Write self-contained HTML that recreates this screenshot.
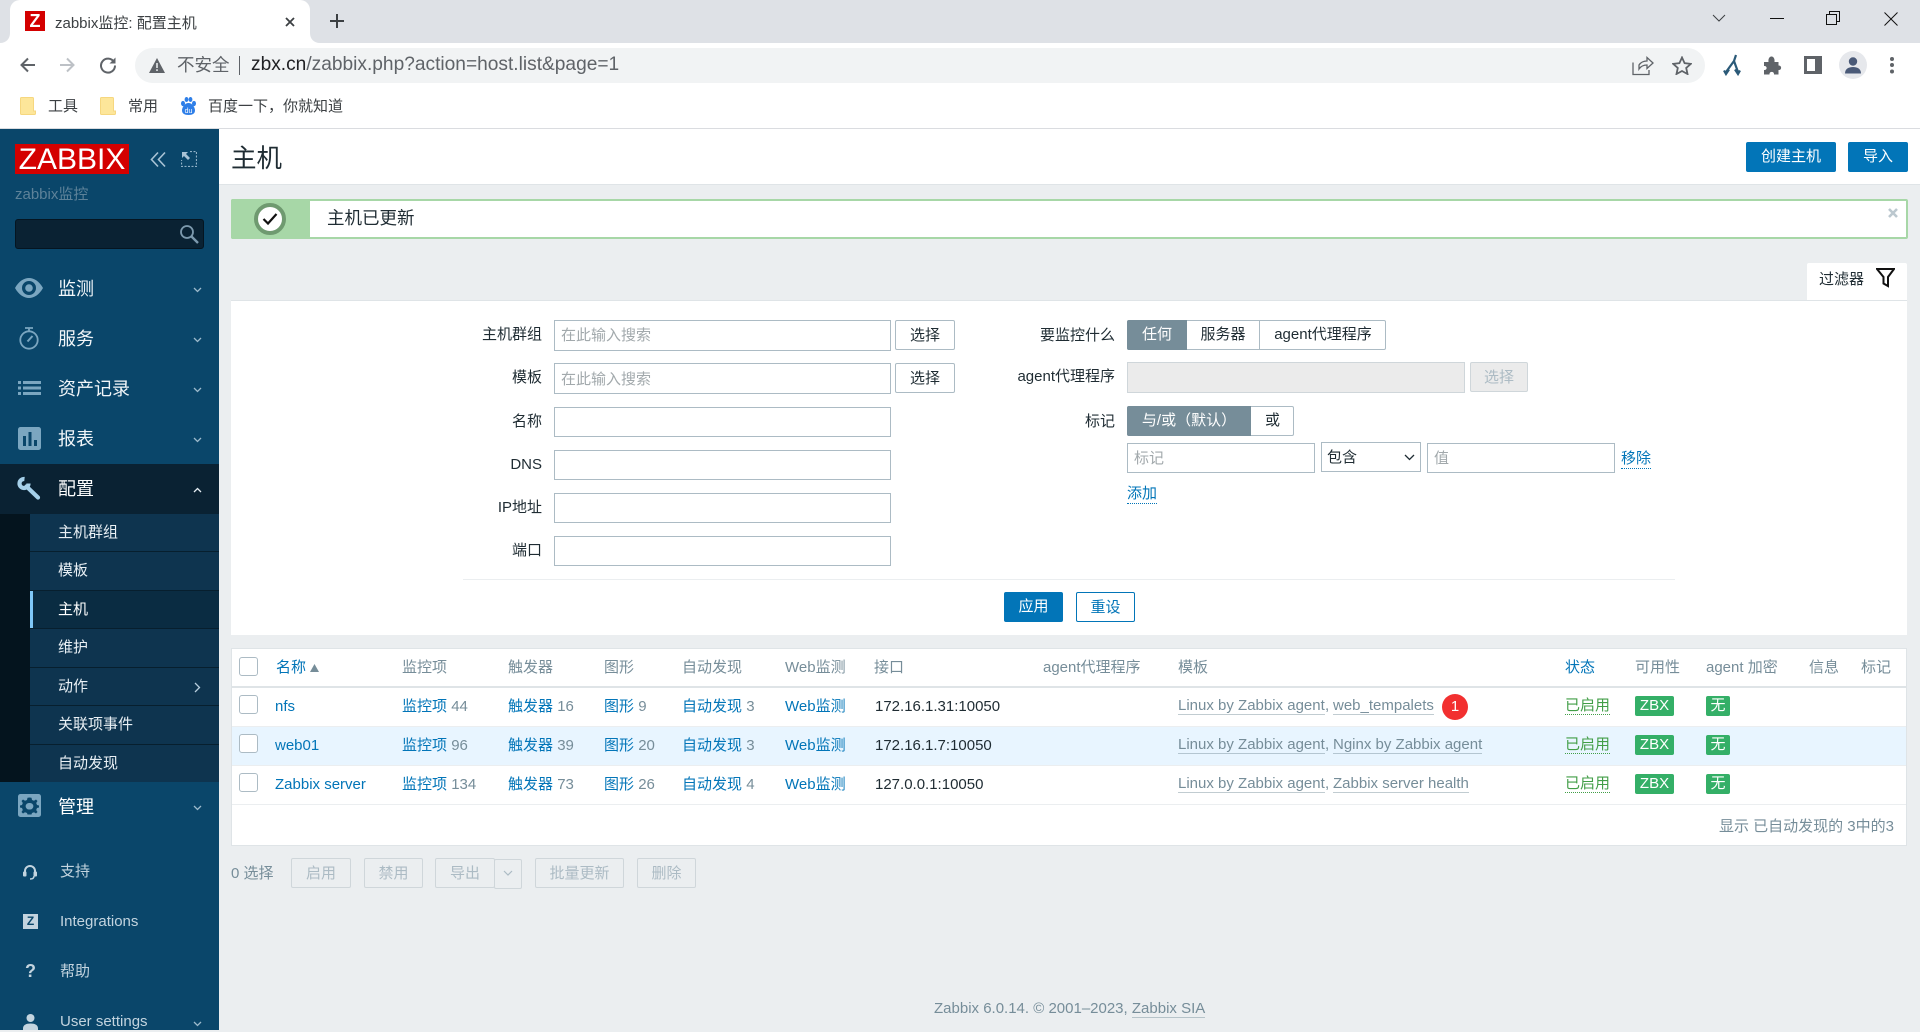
<!DOCTYPE html>
<html lang="zh">
<head>
<meta charset="utf-8">
<title>zabbix监控: 配置主机</title>
<style>
html,body{margin:0;padding:0}
body{position:relative;width:1920px;height:1030px;overflow:hidden;background:#ebeef0;font-family:"Liberation Sans","Noto Sans CJK SC",sans-serif;font-size:15px;color:#1f2c33}
div,span,svg{box-sizing:border-box}
.a{position:absolute}
.t{position:absolute;white-space:nowrap;line-height:20px;height:20px}
.r{text-align:right}
.c{text-align:center}
svg{position:absolute;display:block}
.in{position:absolute;background:#fff;border:1px solid #acbbc4;height:30px}
.ph{position:absolute;color:#a2a9ac;white-space:nowrap;line-height:20px;left:6px;top:5px}
.btn{position:absolute;background:#fff;border:1px solid #acbbc4;border-radius:2px;height:30px;line-height:29px;text-align:center;color:#1f2c33}
.dis{position:absolute;background:#ebeef0;border:1px solid #cfd6da;border-radius:2px;height:30px;line-height:29px;text-align:center;color:#acbbc4}
.blue{position:absolute;background:#0275b8;color:#fff;border-radius:2px;text-align:center;height:30px;line-height:29px}
.side{color:#f2f6f9;font-size:18px}
.sub{color:#e9f0f5;font-size:15px;left:58px}
.low{color:#c3d4df;font-size:15px;left:60px}
.lnk{color:#0275b8}
.gr{color:#768d99}
.cb{position:absolute;left:239px;width:19px;height:19px;background:#fff;border:1px solid #acbbc4;border-radius:3px}
.tp{position:absolute;white-space:nowrap;line-height:17px;height:18px;color:#768d99;border-bottom:1px solid rgba(118,141,153,.45)}
.en{position:absolute;white-space:nowrap;left:1565px;width:45px;line-height:17px;height:18px;color:#429e47;border-bottom:1px dotted #429e47}
.tag{position:absolute;background:#34af67;color:#fff;height:20px;line-height:19px;text-align:center;border-radius:2px}
.th{color:#768d99}
.sep{position:absolute;left:30px;width:189px;height:1px;background:#071f2e}
</style>
</head>
<body>

<!-- browser chrome -->
<div class="a" style="left:0;top:0;width:1920px;height:43px;background:#dee1e6"></div>
<div class="a" style="left:0;top:43px;width:1920px;height:85px;background:#fff"></div>
<div class="a" style="left:0;top:128px;width:1920px;height:1px;background:#dadce0"></div>
<div class="a" style="left:10px;top:0;width:300px;height:44px;background:#fff;border-radius:10px 10px 0 0"></div>
<svg style="left:0;top:33px" width="10" height="10"><path d="M0 10C6 10 10 6 10 0V10Z" fill="#fff"/></svg>
<svg style="left:310px;top:33px" width="10" height="10"><path d="M0 0C0 6 4 10 10 10H0Z" fill="#fff"/></svg>
<div class="a" style="left:25px;top:11px;width:20px;height:20px;background:#d40000;color:#fff;font:bold 18px/20px 'Liberation Sans',sans-serif;text-align:center">Z</div>
<div class="t" style="left:55px;top:14px;color:#3c4043">zabbix监控: 配置主机</div>
<svg style="left:284px;top:16px" width="12" height="12"><path d="M2 2L10 10M10 2L2 10" stroke="#3c4043" stroke-width="1.8"/></svg>
<svg style="left:329px;top:13px" width="16" height="16"><path d="M8 1V15M1 8H15" stroke="#3c4043" stroke-width="2"/></svg>
<svg style="left:1712px;top:13px" width="14" height="10"><path d="M1 2L7 8L13 2" fill="none" stroke="#3c4043" stroke-width="1"/></svg>
<svg style="left:1770px;top:17px" width="14" height="3"><path d="M0 1.5H14" stroke="#111" stroke-width="1"/></svg>
<svg style="left:1826px;top:11px" width="14" height="14"><path d="M.5 3.5H10.5V13.5H.5ZM3.5 3.5V.5H13.5V10.5H10.5" fill="none" stroke="#111" stroke-width="1"/></svg>
<svg style="left:1884px;top:12px" width="14" height="14"><path d="M.5.5L13.5 13.5M13.5.5L.5 13.5" stroke="#111" stroke-width="1"/></svg>

<svg style="left:19px;top:56px" width="18" height="18"><path d="M16 9H3M9 2.5L2.5 9L9 15.5" fill="none" stroke="#5f6368" stroke-width="2"/></svg>
<svg style="left:58px;top:56px" width="18" height="18"><path d="M2 9H15M9 2.5L15.5 9L9 15.5" fill="none" stroke="#bdc1c6" stroke-width="2"/></svg>
<svg style="left:99px;top:56px" width="18" height="18"><path d="M15 6A7 7 0 1 0 16 9.500" fill="none" stroke="#5f6368" stroke-width="2"/><path d="M16.500 1.500V7.500H10.500Z" fill="#5f6368"/></svg>
<div class="a" style="left:135px;top:48px;width:1570px;height:35px;background:#f1f3f4;border-radius:18px"></div>
<svg style="left:149px;top:58px" width="16" height="15"><path d="M8 0L16 15H0Z" fill="#5f6368"/><path d="M8 5V10M8 11.200V13" stroke="#f1f3f4" stroke-width="1.500"/></svg>
<div class="t" style="left:177px;top:55px;font-size:17.500px;color:#5f6368">不安全</div>
<div class="a" style="left:239px;top:56px;width:1px;height:19px;background:#5f6368"></div>
<div class="t" style="left:251px;top:55px;font-size:19.150px;color:#5f6368"><span style="color:#202124">zbx.cn</span>/zabbix.php?action=host.list&amp;page=1</div>
<svg style="left:1632px;top:56px" width="22" height="20"><path d="M7 9C9 6 12 5 15 5V1.500L21 7L15 12.500V9C12 9 9 10 7 13ZM1 6.500V18.500H17V14" fill="none" stroke="#5f6368" stroke-width="1.300"/></svg>
<svg style="left:1672px;top:56px" width="20" height="19"><path d="M10 1.500L12.600 7.200L18.800 7.900L14.200 12L15.500 18L10 15L4.500 18L5.800 12L1.200 7.900L7.400 7.200Z" fill="none" stroke="#5f6368" stroke-width="1.800"/></svg>
<svg style="left:1723px;top:54px" width="18" height="22"><path d="M13 1L11 7L3 18M11 7L15 18M6 15.500L3 20L1 16.500M12 15.500L15 20L17 16.500" fill="none" stroke="#2b5a78" stroke-width="2.200"/></svg>
<svg style="left:1764px;top:56px" width="18" height="19"><path d="M0 6H4.500C4 2 6 .5 7.500.5S11 2 10.500 6H14.500V9.500C18 9 18 14.500 14.500 14V18.500H10C10.500 15 5 15 5.500 18.500H0V14C3.500 14.500 3.500 9.500 0 10Z" fill="#5f6368"/></svg>
<svg style="left:1804px;top:56px" width="18" height="18"><path d="M0 0H18V18H0ZM3 3V15H11V3Z" fill="#5f6368" fill-rule="evenodd"/></svg>
<div class="a" style="left:1839px;top:51px;width:28px;height:28px;border-radius:50%;background:#e6e8ec"></div>
<svg style="left:1844px;top:57px" width="18" height="17"><circle cx="9" cy="4.500" r="4.200" fill="#4a5a78"/><path d="M1 16.500C1 11.500 5 10 9 10S17 11.500 17 16.500Z" fill="#4a5a78"/></svg>
<svg style="left:1889px;top:56px" width="6" height="18"><circle cx="3" cy="3" r="2" fill="#5f6368"/><circle cx="3" cy="9" r="2" fill="#5f6368"/><circle cx="3" cy="15.500" r="2" fill="#5f6368"/></svg>

<!-- bookmarks -->
<svg style="left:20px;top:97px" width="16" height="19"><path d="M1.500.5H12.500Q13.500.5 13.500 1.500V14H15.500V16.500Q15.500 17.500 14.500 17.500H1.500Q.5 17.500 .5 16.500V1.500Q.5.5 1.500.5Z" fill="#fde69a" stroke="#f6d77f"/></svg>
<div class="t" style="left:48px;top:97px;color:#3c4043">工具</div>
<svg style="left:100px;top:97px" width="16" height="19"><path d="M1.500.5H12.500Q13.500.5 13.500 1.500V14H15.500V16.500Q15.500 17.500 14.500 17.500H1.500Q.5 17.500 .5 16.500V1.500Q.5.5 1.500.5Z" fill="#fde69a" stroke="#f6d77f"/></svg>
<div class="t" style="left:128px;top:97px;color:#3c4043">常用</div>
<svg style="left:180px;top:97px" width="17" height="18" fill="#2f7fe8"><ellipse cx="3" cy="6.500" rx="2" ry="2.600"/><ellipse cx="6.500" cy="2.500" rx="1.900" ry="2.500"/><ellipse cx="10.500" cy="2.500" rx="1.900" ry="2.500"/><ellipse cx="14" cy="6.500" rx="2" ry="2.600"/><path d="M8.500 6C5 6 2 10 2 13.500C2 16.500 4.500 18 8.500 18S15 16.500 15 13.500C15 10 12 6 8.500 6Z"/><text x="8.500" y="16" text-anchor="middle" font-size="7" fill="#fff" font-family="Liberation Sans">du</text></svg>
<div class="t" style="left:208px;top:97px;color:#3c4043">百度一下，你就知道</div>

<!-- sidebar -->
<div class="a" style="left:0;top:129px;width:219px;height:901px;background:#0a466a"></div>
<div class="a" style="left:15px;top:144px;width:114px;height:30px;background:#d40000;color:#fff;font-size:30px;line-height:31px;text-align:center">ZABBIX</div>
<svg style="left:150px;top:151px" width="17" height="17"><path d="M8 1.500L1.500 8.500L8 15.500M15 1.500L8.500 8.500L15 15.500" fill="none" stroke="#a9c3d5" stroke-width="1.600"/></svg>
<svg style="left:181px;top:151px" width="16" height="16"><path d="M9 .5H15.500V15.500H.5V9" fill="none" stroke="#8fb0c6" stroke-width="1.200" stroke-dasharray="2 1.500"/><path d="M1 1H7L5 3L9 7L7 9L3 5L1 7Z" fill="#a9c3d5"/></svg>
<div class="t" style="left:15px;top:185px;color:#5d8299">zabbix监控</div>
<div class="a" style="left:15px;top:219px;width:189px;height:30px;background:#0a2233;border:1px solid #051521;border-radius:3px"></div>
<svg style="left:179px;top:224px" width="20" height="20"><circle cx="8" cy="8" r="6" fill="none" stroke="#7d9aae" stroke-width="1.800"/><path d="M12.500 12.500L19 19" stroke="#7d9aae" stroke-width="2.400"/></svg>

<svg style="left:15px;top:278px" width="28" height="20"><path d="M0 10C4 3 9 0 14 0S24 3 28 10C24 17 19 20 14 20S4 17 0 10ZM14 3A7 7 0 1 0 14 17A7 7 0 1 0 14 3Z" fill="#7ba6c0" fill-rule="evenodd"/><circle cx="14" cy="10" r="3.800" fill="#7ba6c0"/></svg>
<div class="t side" style="left:58px;top:279px">监测</div>
<svg style="left:19px;top:327px" width="20" height="23"><circle cx="10" cy="13" r="8.700" fill="none" stroke="#7ba6c0" stroke-width="1.800"/><path d="M6 1H14M10 1V4" stroke="#7ba6c0" stroke-width="1.800"/><path d="M8.500 14.500L13.500 9" stroke="#7ba6c0" stroke-width="2"/></svg>
<div class="t side" style="left:58px;top:329px">服务</div>
<svg style="left:18px;top:381px" width="23" height="14" fill="#7ba6c0"><rect x="0" y="0" width="3" height="3"/><rect x="5" y="0" width="18" height="3"/><rect x="0" y="5.500" width="3" height="3"/><rect x="5" y="5.500" width="18" height="3"/><rect x="0" y="11" width="3" height="3"/><rect x="5" y="11" width="18" height="3"/></svg>
<div class="t side" style="left:58px;top:379px">资产记录</div>
<svg style="left:18px;top:427px" width="23" height="23"><rect width="23" height="23" rx="2.500" fill="#7ba6c0"/><path d="M5 9H8V19H5ZM10.500 5H13.500V19H10.500ZM16 13H19V19H16Z" fill="#0a466a"/></svg>
<div class="t side" style="left:58px;top:429px">报表</div>

<div class="a" style="left:0;top:464px;width:219px;height:50px;background:#0a2233"></div>
<svg style="left:17px;top:476px" width="24" height="24"><path d="M7.500 3A4.500 4.500 0 1 0 11.500 7.500" fill="none" stroke="#a5d0ea" stroke-width="4.200"/><path d="M9.500 10.500L21 21.500" stroke="#a5d0ea" stroke-width="4.200" stroke-linecap="round"/></svg>
<div class="t side" style="left:58px;top:479px;color:#fff">配置</div>
<div class="a" style="left:0;top:514px;width:30px;height:268px;background:#04141e"></div>
<div class="a" style="left:30px;top:514px;width:189px;height:268px;background:#0e344f"></div>
<div class="a" style="left:30px;top:591px;width:189px;height:37px;background:#0a2c42"></div>
<div class="a" style="left:30px;top:591px;width:3px;height:37px;background:#7fc8f8"></div>
<div class="sep" style="top:551px"></div><div class="sep" style="top:590px"></div><div class="sep" style="top:628px"></div><div class="sep" style="top:667px"></div><div class="sep" style="top:705px"></div><div class="sep" style="top:744px"></div>
<div class="t sub" style="top:523px">主机群组</div>
<div class="t sub" style="top:561px">模板</div>
<div class="t sub" style="top:600px;color:#fff">主机</div>
<div class="t sub" style="top:638px">维护</div>
<div class="t sub" style="top:677px">动作</div>
<div class="t sub" style="top:715px">关联项事件</div>
<div class="t sub" style="top:754px">自动发现</div>
<svg style="left:194px;top:682px" width="7" height="11"><path d="M1 1L5.500 5.500L1 10" fill="none" stroke="#b7cddd" stroke-width="1.300"/></svg>

<svg style="left:18px;top:794px" width="23" height="23"><rect width="23" height="23" rx="2.500" fill="#7ba6c0"/><path d="M11.500 3.500L13.500 3.800L14 6L16 6.800L18 5.500L19.500 7L18.200 9L19 11L21 11.500V13.500L19 14L18.200 16L19.500 18L18 19.500L16 18.200L14 19L13.500 20.500H9.500L9 19L7 18.200L5 19.500L3.500 18L4.800 16L4 14L2 13.500V11.500L4 11L4.800 9L3.500 7L5 5.500L7 6.800L9 6L9.500 3.800ZM11.500 9A3.300 3.300 0 1 0 11.500 15.500A3.300 3.300 0 1 0 11.500 9Z" fill="#0a466a" fill-rule="evenodd"/></svg>
<div class="t side" style="left:58px;top:797px;color:#fff">管理</div>

<svg style="left:23px;top:864px" width="14" height="17"><path d="M2 10V7A5 5 0 0 1 12 7V10" fill="none" stroke="#c3d4df" stroke-width="2"/><rect x="0" y="7.500" width="3.500" height="5" rx="1" fill="#c3d4df"/><rect x="10.500" y="7.500" width="3.500" height="5" rx="1" fill="#c3d4df"/><path d="M11 12C11 14.500 9.500 15 7 15" fill="none" stroke="#c3d4df" stroke-width="1.500"/></svg>
<div class="t low" style="top:862px">支持</div>
<div class="a" style="left:23px;top:914px;width:15px;height:15px;background:#c3d4df;color:#0a466a;font:bold 12px/15px 'Liberation Sans',sans-serif;text-align:center">Z</div>
<div class="t low" style="top:912px">Integrations</div>
<div class="t" style="left:25px;top:961px;color:#c3d4df;font-size:18px;font-weight:bold">?</div>
<div class="t low" style="top:962px">帮助</div>
<svg style="left:23px;top:1014px" width="15" height="16"><circle cx="7.500" cy="4" r="4" fill="#c3d4df"/><path d="M0 14.500C0 11 3 9.500 7.500 9.500S15 11 15 14.500V16H0Z" fill="#c3d4df"/></svg>
<div class="t low" style="top:1012px">User settings</div>
<svg style="left:193px;top:287px" width="9" height="6"><path d="M1 1L4.500 4.500L8 1" fill="none" stroke="#9dbacc" stroke-width="1.300"/></svg>
<svg style="left:193px;top:337px" width="9" height="6"><path d="M1 1L4.500 4.500L8 1" fill="none" stroke="#9dbacc" stroke-width="1.300"/></svg>
<svg style="left:193px;top:387px" width="9" height="6"><path d="M1 1L4.500 4.500L8 1" fill="none" stroke="#9dbacc" stroke-width="1.300"/></svg>
<svg style="left:193px;top:437px" width="9" height="6"><path d="M1 1L4.500 4.500L8 1" fill="none" stroke="#9dbacc" stroke-width="1.300"/></svg>
<svg style="left:193px;top:487px" width="9" height="6"><path d="M1 5L4.500 1.500L8 5" fill="none" stroke="#e6eef4" stroke-width="1.300"/></svg>
<svg style="left:193px;top:805px" width="9" height="6"><path d="M1 1L4.500 4.500L8 1" fill="none" stroke="#9dbacc" stroke-width="1.300"/></svg>
<svg style="left:193px;top:1021px" width="9" height="6"><path d="M1 1L4.500 4.500L8 1" fill="none" stroke="#9dbacc" stroke-width="1.300"/></svg>

<!-- page header -->
<div class="a" style="left:219px;top:129px;width:1701px;height:56px;background:#fff;border-bottom:1px solid #dfe4e7"></div>
<div class="t" style="left:231px;top:149px;font-size:25.500px;color:#1f2c33">主机</div>
<div class="blue" style="left:1746px;top:142px;width:90px">创建主机</div>
<div class="blue" style="left:1848px;top:142px;width:60px">导入</div>

<!-- message -->
<div class="a" style="left:231px;top:199px;width:1677px;height:40px;background:#fff;border:2px solid #a7d7a7;border-radius:2px"></div>
<div class="a" style="left:231px;top:199px;width:79px;height:40px;background:#a7d7a7;border-radius:2px 0 0 2px"></div>
<div class="a" style="left:254px;top:203px;width:32px;height:32px;border-radius:50%;background:#fff;border:4px solid #6f9a70"></div>
<svg style="left:262px;top:212px" width="16" height="14"><path d="M1.500 7L6 11.500L14.500 2" fill="none" stroke="#111" stroke-width="2.200"/></svg>
<div class="t" style="left:327px;top:208px;font-size:17.500px">主机已更新</div>
<svg style="left:1888px;top:208px" width="10" height="10"><path d="M1 1L9 9M9 1L1 9" stroke="#bcc8cf" stroke-width="2.600"/></svg>

<!-- filter tab -->
<div class="a" style="left:1807px;top:263px;width:100px;height:38px;background:#fff;border-radius:2px 2px 0 0"></div>
<div class="t" style="left:1819px;top:270px">过滤器</div>
<svg style="left:1876px;top:268px" width="19" height="20"><path d="M1 1H18L12 9V18L7.500 15.500V9Z" fill="none" stroke="#111" stroke-width="2"/></svg>

<!-- filter panel -->
<div class="a" style="left:231px;top:300px;width:1676px;height:335px;background:#fff;border-top:1px solid #dfe4e7"></div>
<div class="t r" style="right:1378px;top:325px">主机群组</div>
<div class="t r" style="right:1378px;top:368px">模板</div>
<div class="t r" style="right:1378px;top:412px">名称</div>
<div class="t r" style="right:1378px;top:455px">DNS</div>
<div class="t r" style="right:1378px;top:498px">IP地址</div>
<div class="t r" style="right:1378px;top:541px">端口</div>
<div class="in" style="left:554px;top:320px;width:337px;height:31px"><span class="ph">在此输入搜索</span></div>
<div class="in" style="left:554px;top:363px;width:337px;height:31px"><span class="ph" style="top:6px">在此输入搜索</span></div>
<div class="in" style="left:554px;top:407px;width:337px"></div>
<div class="in" style="left:554px;top:450px;width:337px"></div>
<div class="in" style="left:554px;top:493px;width:337px"></div>
<div class="in" style="left:554px;top:536px;width:337px"></div>
<div class="btn" style="left:895px;top:320px;width:60px">选择</div>
<div class="btn" style="left:895px;top:363px;width:60px">选择</div>

<div class="t r" style="right:805px;top:326px">要监控什么</div>
<div class="t r" style="right:805px;top:367px">agent代理程序</div>
<div class="t r" style="right:805px;top:412px">标记</div>
<div class="a" style="left:1127px;top:320px;width:259px;height:30px;background:#fff;border:1px solid #acbbc4;border-radius:2px"></div>
<div class="a c" style="left:1127px;top:320px;width:60px;height:30px;background:#768d99;color:#fff;line-height:29px;border-radius:2px 0 0 2px">任何</div>
<div class="a c" style="left:1187px;top:320px;width:73px;height:30px;line-height:29px;border-right:1px solid #acbbc4">服务器</div>
<div class="a c" style="left:1260px;top:320px;width:126px;height:30px;line-height:29px">agent代理程序</div>
<div class="a" style="left:1127px;top:362px;width:338px;height:31px;background:#ebebeb;border:1px solid #cfd6da"></div>
<div class="dis" style="left:1470px;top:362px;width:58px;background:#ebebeb">选择</div>
<div class="a" style="left:1127px;top:406px;width:167px;height:30px;background:#fff;border:1px solid #acbbc4;border-radius:2px"></div>
<div class="a c" style="left:1127px;top:406px;width:124px;height:30px;background:#768d99;color:#fff;line-height:30px;border-radius:2px 0 0 2px">与/或（默认）</div>
<div class="a c" style="left:1251px;top:406px;width:43px;height:30px;line-height:29px">或</div>
<div class="in" style="left:1127px;top:443px;width:188px"><span class="ph">标记</span></div>
<div class="in" style="left:1321px;top:442px;width:100px"><span class="ph" style="color:#1f2c33;left:5px">包含</span></div>
<svg style="left:1404px;top:454px" width="11" height="7"><path d="M1 1L5.500 5.500L10 1" fill="none" stroke="#1f2c33" stroke-width="1.300"/></svg>
<div class="in" style="left:1427px;top:443px;width:188px"><span class="ph">值</span></div>
<div class="t lnk" style="left:1621px;top:449px;height:20px;border-bottom:1px dotted #0275b8">移除</div>
<div class="t lnk" style="left:1127px;top:484px;height:20px;border-bottom:1px dotted #0275b8">添加</div>
<div class="a" style="left:463px;top:579px;width:1212px;height:1px;background:#ebeef0"></div>
<div class="blue" style="left:1004px;top:592px;width:59px;line-height:30px">应用</div>
<div class="blue" style="left:1076px;top:592px;width:59px;background:#fff;color:#0275b8;border:1px solid #0275b8;line-height:29px">重设</div>

<!-- table -->
<div class="a" style="left:231px;top:648px;width:1676px;height:198px;background:#fff;border:1px solid #dfe4e7"></div>
<div class="a" style="left:232px;top:686px;width:1674px;height:2px;background:#dfe4e7"></div>
<div class="a" style="left:232px;top:726px;width:1674px;height:1px;background:#ebeef0"></div>
<div class="a" style="left:232px;top:727px;width:1674px;height:38px;background:#e8f5ff"></div>
<div class="a" style="left:232px;top:765px;width:1674px;height:1px;background:#ebeef0"></div>
<div class="a" style="left:232px;top:804px;width:1674px;height:1px;background:#ebeef0"></div>

<div class="cb" style="top:657px"></div><div class="cb" style="top:695px"></div><div class="cb" style="top:734px"></div><div class="cb" style="top:773px"></div>
<div class="t lnk" style="left:276px;top:658px">名称</div>
<svg style="left:310px;top:664px" width="9" height="8"><path d="M4.500 0L9 8H0Z" fill="#768d99"/></svg>
<div class="t th" style="left:402px;top:658px">监控项</div>
<div class="t th" style="left:508px;top:658px">触发器</div>
<div class="t th" style="left:604px;top:658px">图形</div>
<div class="t th" style="left:682px;top:658px">自动发现</div>
<div class="t th" style="left:785px;top:658px">Web监测</div>
<div class="t th" style="left:874px;top:658px">接口</div>
<div class="t th" style="left:1043px;top:658px">agent代理程序</div>
<div class="t th" style="left:1178px;top:658px">模板</div>
<div class="t lnk" style="left:1565px;top:658px">状态</div>
<div class="t th" style="left:1635px;top:658px">可用性</div>
<div class="t th" style="left:1706px;top:658px">agent 加密</div>
<div class="t th" style="left:1809px;top:658px">信息</div>
<div class="t th" style="left:1861px;top:658px">标记</div>

<div class="t lnk" style="left:275px;top:697px">nfs</div>
<div class="t" style="left:402px;top:697px"><span class="lnk">监控项</span> <span class="gr">44</span></div>
<div class="t" style="left:508px;top:697px"><span class="lnk">触发器</span> <span class="gr">16</span></div>
<div class="t" style="left:604px;top:697px"><span class="lnk">图形</span> <span class="gr">9</span></div>
<div class="t" style="left:682px;top:697px"><span class="lnk">自动发现</span> <span class="gr">3</span></div>
<div class="t lnk" style="left:785px;top:697px">Web监测</div>
<div class="t" style="left:875px;top:697px">172.16.1.31:10050</div>
<div class="tp" style="left:1178px;top:697px">Linux by Zabbix agent</div>
<div class="t gr" style="left:1325px;top:696px">,</div>
<div class="tp" style="left:1333px;top:697px">web_tempalets</div>
<div class="a" style="left:1442px;top:694px;width:26px;height:26px;border-radius:50%;background:#f23030;color:#fff;text-align:center;line-height:25px">1</div>
<div class="en" style="top:697px">已启用</div>
<div class="tag" style="left:1635px;top:696px;width:39px">ZBX</div>
<div class="tag" style="left:1706px;top:696px;width:24px">无</div>

<div class="t lnk" style="left:275px;top:736px">web01</div>
<div class="t" style="left:402px;top:736px"><span class="lnk">监控项</span> <span class="gr">96</span></div>
<div class="t" style="left:508px;top:736px"><span class="lnk">触发器</span> <span class="gr">39</span></div>
<div class="t" style="left:604px;top:736px"><span class="lnk">图形</span> <span class="gr">20</span></div>
<div class="t" style="left:682px;top:736px"><span class="lnk">自动发现</span> <span class="gr">3</span></div>
<div class="t lnk" style="left:785px;top:736px">Web监测</div>
<div class="t" style="left:875px;top:736px">172.16.1.7:10050</div>
<div class="tp" style="left:1178px;top:736px">Linux by Zabbix agent</div>
<div class="t gr" style="left:1325px;top:735px">,</div>
<div class="tp" style="left:1333px;top:736px">Nginx by Zabbix agent</div>
<div class="en" style="top:736px">已启用</div>
<div class="tag" style="left:1635px;top:735px;width:39px">ZBX</div>
<div class="tag" style="left:1706px;top:735px;width:24px">无</div>

<div class="t lnk" style="left:275px;top:775px">Zabbix server</div>
<div class="t" style="left:402px;top:775px"><span class="lnk">监控项</span> <span class="gr">134</span></div>
<div class="t" style="left:508px;top:775px"><span class="lnk">触发器</span> <span class="gr">73</span></div>
<div class="t" style="left:604px;top:775px"><span class="lnk">图形</span> <span class="gr">26</span></div>
<div class="t" style="left:682px;top:775px"><span class="lnk">自动发现</span> <span class="gr">4</span></div>
<div class="t lnk" style="left:785px;top:775px">Web监测</div>
<div class="t" style="left:875px;top:775px">127.0.0.1:10050</div>
<div class="tp" style="left:1178px;top:775px">Linux by Zabbix agent</div>
<div class="t gr" style="left:1325px;top:774px">,</div>
<div class="tp" style="left:1333px;top:775px">Zabbix server health</div>
<div class="en" style="top:775px">已启用</div>
<div class="tag" style="left:1635px;top:774px;width:39px">ZBX</div>
<div class="tag" style="left:1706px;top:774px;width:24px">无</div>

<div class="t r gr" style="right:26px;top:817px">显示 已自动发现的 3中的3</div>

<!-- action bar -->
<div class="t gr" style="left:231px;top:864px">0 选择</div>
<div class="dis" style="left:291px;top:858px;width:60px">启用</div>
<div class="dis" style="left:364px;top:858px;width:59px">禁用</div>
<div class="dis" style="left:435px;top:858px;width:60px">导出</div>
<div class="dis" style="left:494px;top:859px;width:28px"></div>
<svg style="left:503px;top:870px" width="10" height="7"><path d="M1 1L5 5L9 1" fill="none" stroke="#acbbc4" stroke-width="1.200"/></svg>
<div class="dis" style="left:535px;top:858px;width:89px">批量更新</div>
<div class="dis" style="left:637px;top:858px;width:59px">删除</div>

<!-- footer -->
<div class="t gr" style="left:934px;top:999px">Zabbix 6.0.14. © 2001–2023, <span style="border-bottom:1px solid rgba(118,141,153,.45)">Zabbix SIA</span></div>

</body>
</html>
